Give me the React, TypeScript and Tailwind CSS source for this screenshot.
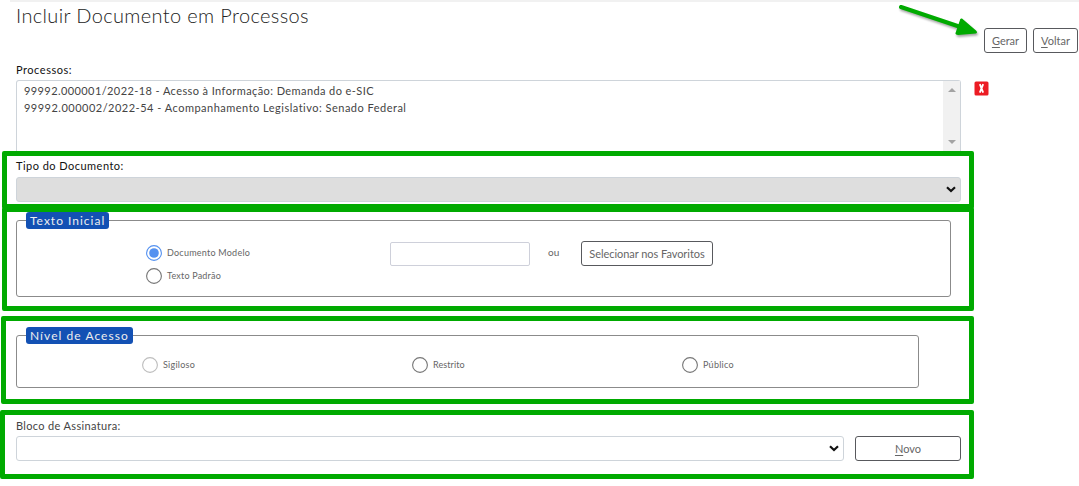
import type { ReactNode } from "react";

function Radio({ label, labelClass, state = "off" }: { label: string; labelClass: string; state?: "on" | "off" | "disabled" }) {
  const stroke = state === "on" ? "#5491f0" : state === "disabled" ? "#bdbdbd" : "#767676";
  return (
    <label className="flex h-[16px] items-center gap-[5px] whitespace-nowrap text-[#666]">
      <svg width="16" height="16" viewBox="0 0 16 16" className="shrink-0">
        <circle cx="8" cy="8" r="7.4" fill="#fff" stroke={stroke} strokeWidth="1.1" />
        {state === "on" && <circle cx="8" cy="8" r="4.8" fill="#5491f0" />}
      </svg>
      <span className={labelClass}>{label}</span>
    </label>
  );
}

function Chevron() {
  return (
    <svg width="10" height="7" viewBox="0 0 10 7" className="shrink-0">
      <path d="M1 1.2 L5 5 L9 1.2" fill="none" stroke="#111" strokeWidth="2.2" />
    </svg>
  );
}

function Button({ className, children }: { className: string; children: ReactNode }) {
  return (
    <button className={"flex h-[25px] shrink-0 items-center justify-center whitespace-nowrap rounded-[3px] border border-[#58595d] bg-white pt-px text-[#666] " + className}>
      {children}
    </button>
  );
}

export default function App() {
  return (
    <div className="flex h-[486px] w-[1079px] overflow-hidden bg-white font-['Lato',sans-serif] text-[#333]">
      <main className="flex w-[974px] shrink-0 flex-col">
        <div className="ml-[10px] h-[2px] bg-[#f1f1f1]" />
        <h1 className="ml-[16px] mt-px h-[25px] whitespace-nowrap text-[20px] font-light leading-[24px] tracking-[0.36px] text-[#222]">
          Incluir Documento em Processos
        </h1>
        <div className="ml-[16px] mt-[35px] h-[14px] whitespace-nowrap text-[11px] leading-[14px] tracking-[0.53px] text-[#111]">Processos:</div>
        <div className="ml-[16px] mt-[3px] flex h-[71px] w-[945px] justify-between rounded-t-[3px] border border-b-0 border-[#ced4da]">
          <div className="whitespace-nowrap pl-[7px] pt-px text-[11px] leading-[17px] text-[#444]">
            <div className="tracking-[0.41px]">99992.000001/2022-18 - Acesso à Informação: Demanda do e-SIC</div>
            <div className="tracking-[0.49px]">99992.000002/2022-54 - Acompanhamento Legislativo: Senado Federal</div>
          </div>
          <div className="flex w-[17px] flex-col items-center justify-between bg-[#f1f1f1] pb-[7px] pt-[7px]">
            <svg width="8" height="4" viewBox="0 0 8 4"><path d="M0 4 L4 0 L8 4Z" fill="#a3a3a3" /></svg>
            <svg width="8" height="4" viewBox="0 0 8 4"><path d="M0 0 L4 4 L8 0Z" fill="#a3a3a3" /></svg>
          </div>
        </div>

        <section className="ml-[2px] h-[58px] shrink-0 rounded-[2px] border-[5px] border-[#00aa00] pl-[9px] pt-[3px]">
          <div className="h-[14px] whitespace-nowrap text-[11px] leading-[14px] tracking-[0.47px] text-[#111]">Tipo do Documento:</div>
          <div className="mt-[4px] flex h-[25px] w-[945px] items-center justify-end rounded-[3px] border border-[#ced4da] bg-[#dedede] pr-[4px]">
            <Chevron />
          </div>
        </section>

        <section className="-mt-[2px] ml-[2px] h-[104px] shrink-0 rounded-[2px] border-[5px] border-[#00aa00] pl-[9px]">
          <fieldset className="h-[85px] w-[935px] rounded-[3px] border border-[#8b8b8b]">
            <legend className="ml-[9px] flex h-[17px] w-[83px] items-center whitespace-nowrap rounded-[3px] bg-[#1351b4] pl-[4px] text-[12px] leading-[17px] tracking-[1px] text-[#eee]">
              Texto Inicial
            </legend>
            <div className="flex pl-[129px] pt-[12px]">
              <div className="flex w-[244px] flex-col gap-[7px] pt-[4px]">
                <Radio label="Documento Modelo" labelClass="text-[9px] tracking-[0.24px]" state="on" />
                <Radio label="Texto Padrão" labelClass="text-[9px] tracking-[0.2px]" />
              </div>
              <div className="mt-px h-[24px] w-[140px] rounded-[2px] border border-[#ced0da]" />
              <span className="ml-[18px] w-[33px] text-[10px] leading-[23px] text-[#666]">ou</span>
              <Button className="w-[132px] text-[11px] tracking-[-0.05px]">Selecionar nos Favoritos</Button>
            </div>
          </fieldset>
        </section>

        <section className="ml-px mt-[5px] h-[88px] shrink-0 rounded-[2px] border-[5px] border-[#00aa00] pl-[10px] pt-[6px]">
          <fieldset className="h-[61px] w-[903px] rounded-[3px] border border-[#8b8b8b]">
            <legend className="ml-[9px] flex h-[17px] w-[107px] items-center whitespace-nowrap rounded-[3px] bg-[#1351b4] pl-[4px] text-[12px] leading-[17px] tracking-[1.05px] text-[#eee]">
              Nível de Acesso
            </legend>
            <div className="grid grid-cols-[270px_270px_200px] pl-[125px] pt-[13px]">
              <Radio label="Sigiloso" labelClass="text-[9px] tracking-[0.25px]" state="disabled" />
              <Radio label="Restrito" labelClass="text-[9px] tracking-[0.1px]" />
              <Radio label="Público" labelClass="text-[9px] tracking-[0.25px]" />
            </div>
          </fieldset>
        </section>

        <section className="mt-[6px] h-[69px] shrink-0 rounded-[2px] border-[5px] border-[#00aa00] pl-[11px] pt-[4px]">
          <div className="h-[14px] whitespace-nowrap text-[11px] leading-[14px] tracking-[0.34px] text-[#444]">Bloco de Assinatura:</div>
          <div className="mt-[3px] flex gap-[11px]">
            <div className="flex h-[25px] w-[828px] items-center justify-end rounded-[3px] border border-[#ced4da] pr-[4px]">
              <Chevron />
            </div>
            <Button className="w-[106px] text-[11px]"><span><u className="underline-offset-2">N</u>ovo</span></Button>
          </div>
        </section>
      </main>

      <aside className="flex w-[105px] shrink-0 flex-col">
        <div className="h-[2px] bg-[#f1f1f1]" />
        <div className="mt-[26px] flex gap-[6px] pl-[10px]">
          <div className="relative">
            <Button className="w-[43px] text-[11px]"><span><u className="underline-offset-2">G</u>erar</span></Button>
            <svg className="absolute -left-[88px] -top-[26px] drop-shadow-[1px_2px_1px_rgba(0,0,0,0.35)]" width="86" height="38" viewBox="896 2 86 38">
              <path d="M901 7 L962 27.5" stroke="#00aa00" strokeWidth="4" strokeLinecap="round" />
              <path d="M962 18.5 Q960 18 960 20 L955.5 33 Q955 35 958 35 L976 33.5 Q978 32.5 976 30.5 Z" fill="#00aa00" />
            </svg>
          </div>
          <Button className="w-[45px] text-[11px]"><span><u className="underline-offset-2">V</u>oltar</span></Button>
        </div>
        <svg className="mt-[28px]" width="15" height="15" viewBox="0 0 15 15">
          <rect x="0.5" y="0.5" width="14" height="14" rx="1.5" fill="#ec1c24" />
          <path d="M5.8 3.2 L9.2 11.6 M9.2 3.2 L5.8 11.6" stroke="#fff" strokeWidth="1.8" />
        </svg>
      </aside>
    </div>
  );
}
